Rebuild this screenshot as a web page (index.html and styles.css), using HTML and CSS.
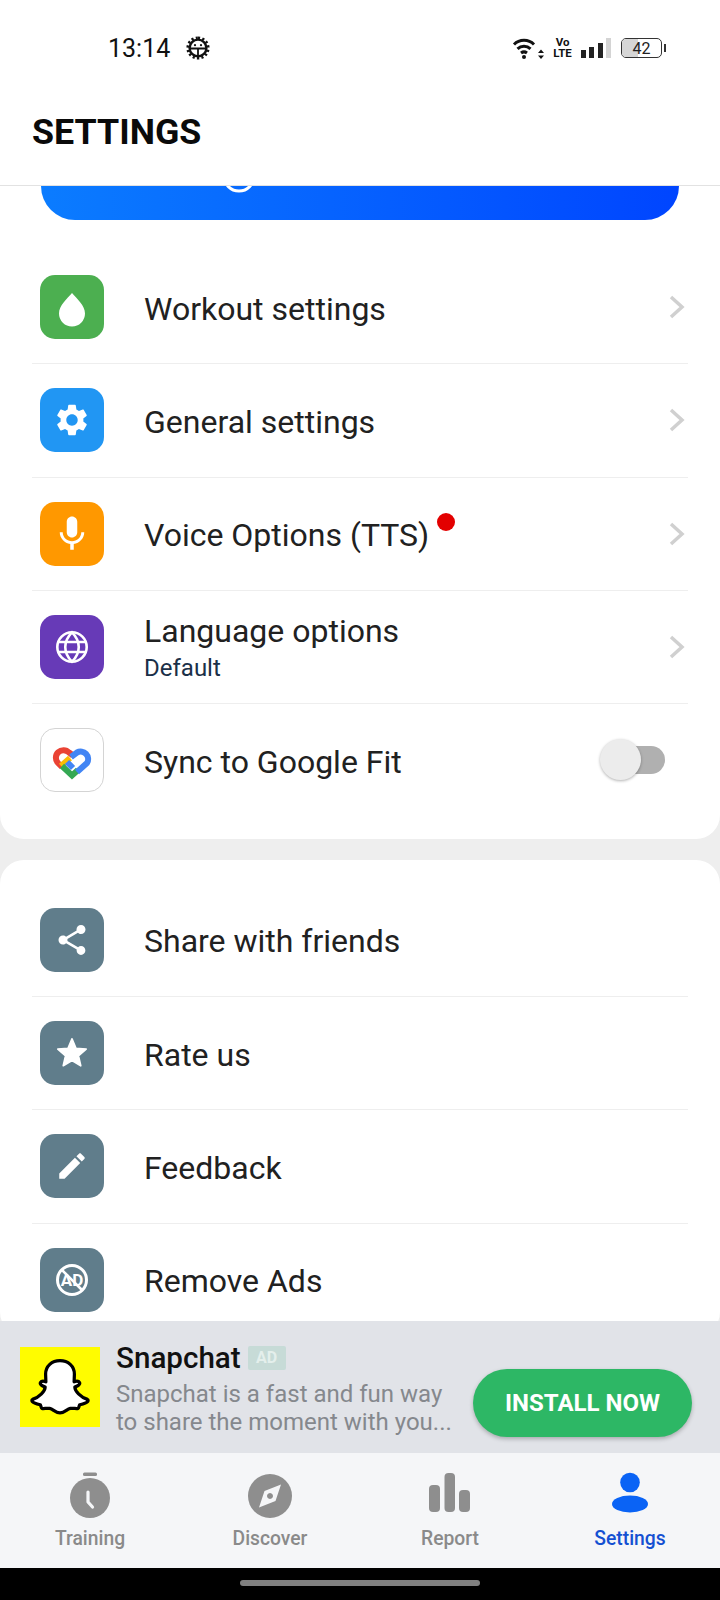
FILE: index.html
```html
<!DOCTYPE html>
<html lang="en">
<head>
<meta charset="utf-8">
<title>Settings</title>
<link rel="stylesheet" href="styles.css">
</head>
<body>
<div class="phone">
  <header class="appbar">
    <div class="status">
      <div class="status-left">
        <span class="time">13:14</span>
        <svg class="bug" viewBox="0 0 24 24" width="24" height="24">
          <g fill="none" stroke="#111" stroke-width="2.4">
            <circle cx="12" cy="12" r="8.400"/>
            <path stroke-dasharray="2.2 2.2" stroke-width="2.6" d="M12 1.700a10.300 10.300 0 1 1-.01 0"/>
            <path stroke-width="1.800" d="M3.500 12.500h17M12 12.500v8"/>
          </g>
          <circle cx="9" cy="9.200" r="1.100" fill="#111"/><circle cx="15" cy="9.200" r="1.100" fill="#111"/>
        </svg>
      </div>
      <div class="status-right">
        <svg class="wifi" viewBox="0 0 33 22" width="33" height="22">
          <g fill="none" stroke="#111" stroke-width="3">
            <path d="M2 7.500a14 14 0 0 1 20 0"/>
            <path d="M5.500 11.800a9.500 9.500 0 0 1 13 0"/>
            <path d="M9 16a5 5 0 0 1 6 0"/>
          </g>
          <circle cx="12" cy="20" r="2" fill="#111"/>
          <path fill="#111" d="M29 12.500l3 3.500h-6zM29 22l-3-3.500h6z"/>
        </svg>
        <span class="volte"><span>Vo</span><span>LTE</span></span>
        <div class="signal">
          <i class="bar b1"></i><i class="bar b2"></i><i class="bar b3"></i><i class="bar b4"></i>
        </div>
        <div class="battery"><i class="battery-fill"></i><span class="battery-num">42</span></div>
        <i class="battery-nub"></i>
      </div>
    </div>
    <h1 class="title">SETTINGS</h1>
  </header>

  <main class="scroll">
    <section class="card card-first">
      <div class="promo">
        <svg class="promo-ring" viewBox="0 0 36 36" width="36" height="36"><circle cx="18" cy="18" r="15" fill="none" stroke="#fff" stroke-width="3"/></svg>
      </div>
      <ul class="rows">
        <li class="row">
          <span class="icon green"><svg viewBox="0 0 64 64" width="64" height="64"><path fill="#fff" d="M32 18c5 6 13 12.500 13 20.500a13 13 0 0 1-26 0c0-8 8-14.500 13-20.500z"/></svg></span>
          <span class="label">Workout settings</span>
          <svg class="chev" viewBox="0 0 16 24" width="16" height="24"><path d="M2 2l11 10L2 22"/></svg>
        </li>
        <li class="row">
          <span class="icon blue"><svg viewBox="0 0 24 24" width="38" height="38"><path fill="#fff" d="M19.140 12.940c.04-.3.06-.61.06-.94 0-.32-.02-.64-.07-.94l2.030-1.580c.18-.14.23-.41.12-.61l-1.920-3.320c-.12-.22-.37-.29-.59-.22l-2.390.96c-.5-.38-1.030-.7-1.620-.94l-.36-2.540c-.04-.24-.24-.41-.48-.41h-3.840c-.24 0-.43.17-.47.41l-.36 2.540c-.59.24-1.130.57-1.620.94l-2.390-.96c-.22-.08-.47 0-.59.22L2.740 8.870c-.12.21-.08.47.12.61l2.030 1.580c-.05.3-.09.63-.09.94s.02.64.07.94l-2.030 1.580c-.18.14-.23.41-.12.61l1.920 3.320c.12.22.37.29.59.22l2.390-.96c.5.38 1.030.7 1.620.94l.36 2.540c.05.24.24.41.48.41h3.840c.24 0 .44-.17.47-.41l.36-2.540c.59-.24 1.130-.56 1.620-.94l2.390.96c.22.08.47 0 .59-.22l1.920-3.320c.12-.22.07-.47-.12-.61l-2.010-1.580zM12 15.600c-1.980 0-3.600-1.620-3.600-3.600s1.620-3.600 3.600-3.600 3.600 1.620 3.600 3.600-1.620 3.600-3.600 3.600z"/></svg></span>
          <span class="label">General settings</span>
          <svg class="chev" viewBox="0 0 16 24" width="16" height="24"><path d="M2 2l11 10L2 22"/></svg>
        </li>
        <li class="row">
          <span class="icon orange"><svg viewBox="0 0 24 24" width="42" height="42"><path fill="#fff" d="M12 14c1.660 0 3-1.340 3-3V5c0-1.660-1.340-3-3-3S9 3.340 9 5v6c0 1.660 1.340 3 3 3zm5.300-3c0 3-2.540 5.100-5.300 5.100S6.700 14 6.700 11H5c0 3.410 2.720 6.230 6 6.720V21h2v-3.280c3.280-.48 6-3.300 6-6.720h-1.700z"/></svg></span>
          <span class="label">Voice Options (TTS)</span>
          <i class="dot"></i>
          <svg class="chev" viewBox="0 0 16 24" width="16" height="24"><path d="M2 2l11 10L2 22"/></svg>
        </li>
        <li class="row">
          <span class="icon purple"><svg viewBox="0 0 36 36" width="36" height="36"><g fill="none" stroke="#fff" stroke-width="2.600"><circle cx="18" cy="18" r="14.700"/><path d="M18 3.300c-9 9-9 20.400 0 29.400c9-9 9-20.400 0-29.400z"/><path d="M4.500 13h27M4.500 23h27"/></g></svg></span>
          <span class="label-stack"><span class="label">Language options</span><span class="sub">Default</span></span>
          <svg class="chev" viewBox="0 0 16 24" width="16" height="24"><path d="M2 2l11 10L2 22"/></svg>
        </li>
        <li class="row">
          <span class="icon fit"><svg viewBox="1 1 62 62" width="62" height="62"><g fill="none" stroke-width="6"><path stroke="#ea4335" d="M33 27.500L29 24.500A7.500 7.500 0 0 0 18 35L22 39"/><path stroke="#fbbc04" d="M21 38L30 30"/><path stroke="#34a853" d="M22 38L32 47.500L38 42"/><path stroke="#4285f4" d="M31 29L37 24.500A7.500 7.500 0 0 1 47 35L37 44M33 40L27 34"/></g></svg></span>
          <span class="label">Sync to Google Fit</span>
          <span class="toggle"><i class="knob"></i></span>
        </li>
      </ul>
    </section>
    <section class="card">
      <ul class="rows">
        <li class="row">
          <span class="icon slate"><svg viewBox="0 0 24 24" width="36" height="36"><path fill="#fff" d="M18 16.080c-.76 0-1.440.3-1.960.77L8.910 12.700c.05-.23.09-.46.09-.7s-.04-.47-.09-.7l7.050-4.110c.54.5 1.250.81 2.040.81 1.660 0 3-1.340 3-3s-1.340-3-3-3-3 1.340-3 3c0 .24.04.47.09.7L8.040 9.810C7.500 9.310 6.790 9 6 9c-1.660 0-3 1.340-3 3s1.340 3 3 3c.79 0 1.500-.31 2.040-.81l7.120 4.160c-.05.21-.08.43-.08.65 0 1.610 1.310 2.920 2.920 2.920 1.610 0 2.920-1.310 2.920-2.920s-1.310-2.920-2.920-2.920z"/></svg></span>
          <span class="label">Share with friends</span>
        </li>
        <li class="row">
          <span class="icon slate"><svg viewBox="0 0 24 24" width="34" height="34"><path fill="#fff" stroke="#fff" stroke-width="1.200" stroke-linejoin="round" d="M12 17.270L18.180 21l-1.640-7.030L22 9.240l-7.190-.61L12 2 9.190 8.630 2 9.240l5.460 4.730L5.820 21z"/></svg></span>
          <span class="label">Rate us</span>
        </li>
        <li class="row">
          <span class="icon slate"><svg viewBox="0 0 24 24" width="34" height="34"><path fill="#fff" d="M3 17.250V21h3.750L17.810 9.940l-3.750-3.750L3 17.250zM20.710 7.040c.39-.39.39-1.020 0-1.410l-2.340-2.340c-.39-.39-1.020-.39-1.410 0l-1.830 1.830 3.750 3.750 1.830-1.830z"/></svg></span>
          <span class="label">Feedback</span>
        </li>
        <li class="row">
          <span class="icon slate"><svg viewBox="0 0 36 36" width="36" height="36"><circle cx="18" cy="18" r="14.500" fill="none" stroke="#fff" stroke-width="3"/><text x="18" y="24" class="ad-glyph" text-anchor="middle">AD</text><path d="M8 8l20 20" stroke="#fff" stroke-width="2.500"/></svg></span>
          <span class="label">Remove Ads</span>
        </li>
      </ul>
    </section>
  </main>

  <aside class="ad">
    <div class="ad-logo">
      <svg viewBox="0 0 80 80" width="80" height="80"><path transform="translate(4 2) scale(.9)" fill="#fff" stroke="#000" stroke-width="3.600" stroke-linejoin="round" d="M40 13c9 0 16 6 16 15l-.3 8.500c2-.8 5-1 6 .8 1 2-1.500 3.500-5.200 5 .2 4.500 6 11 14 13.700.8.300 1 1.300.3 2.300-1.500 2-6 3-9 3.700-.8 1.300-.5 3.500-1.800 4-2 .7-5-.6-8.500 0-4 .7-6 5-11.500 5s-7.500-4.300-11.500-5c-3.500-.6-6.500.7-8.500 0-1.300-.5-1-2.700-1.800-4-3-.7-7.500-1.700-9-3.700-.7-1-.5-2 .3-2.300 8-2.700 13.800-9.200 14-13.700-3.700-1.500-6.200-3-5.200-5 1-1.800 4-1.600 6-.8L24 28c0-9 7-15 16-15z"/></svg>
    </div>
    <div class="ad-body">
      <div class="ad-head"><span class="ad-title">Snapchat</span><span class="ad-badge">AD</span></div>
      <p class="ad-desc">Snapchat is a fast and fun way<br>to share the moment with you...</p>
    </div>
    <button class="install">INSTALL NOW</button>
  </aside>

  <nav class="tabs">
    <div class="tab">
      <svg viewBox="0 0 50 50" width="50" height="50"><rect x="18" y="1.500" width="14" height="3.500" rx="1.500" fill="#8e8e8e"/><circle cx="25" cy="27" r="20" fill="#8e8e8e"/><path d="M23 21v10l4.500 5" fill="none" stroke="#f5f6f8" stroke-width="3.200" stroke-linecap="round" stroke-linejoin="round"/></svg>
      <span>Training</span>
    </div>
    <div class="tab">
      <svg viewBox="0 0 50 50" width="50" height="50"><circle cx="25" cy="25" r="22" fill="#8e8e8e"/><path fill="#f5f6f8" fill-rule="evenodd" d="M36 13.500L30.500 30 14 36.500 19.500 20zM25 22a3 3 0 1 0 .01 0z"/></svg>
      <span>Discover</span>
    </div>
    <div class="tab">
      <svg viewBox="0 0 50 50" width="50" height="50" fill="#8e8e8e"><rect x="4" y="14" width="11" height="27" rx="4"/><rect x="19.500" y="2" width="10.500" height="39" rx="4"/><rect x="34" y="19" width="11" height="22" rx="4"/></svg>
      <span>Report</span>
    </div>
    <div class="tab tab-active">
      <svg viewBox="0 0 50 50" width="50" height="50" fill="#0a63f5"><circle cx="25" cy="11.500" r="9.800"/><ellipse cx="25" cy="33" rx="18" ry="8.500"/></svg>
      <span>Settings</span>
    </div>
  </nav>
  <div class="gesture"><i class="gesture-pill"></i></div>
</div>
</body>
</html>
```

FILE: styles.css
```css
* { box-sizing: border-box; }
html, body { margin: 0; padding: 0; }
body { font-family: Roboto, "Noto Sans", sans-serif; background: #eee; color: #212121; }
ul { list-style: none; margin: 0; padding: 0; }
.phone { width: 720px; height: 1600px; display: flex; flex-direction: column; overflow: hidden; }

.appbar { height: 186px; flex: none; background: #fff; border-bottom: 1px solid #e2e2e2; position: relative; z-index: 2; }
.status { height: 96px; display: flex; justify-content: space-between; align-items: center; padding: 0 54px 0 108px; }
.status-left { display: flex; align-items: center; gap: 16px; }
.time { font-size: 25px; color: #111; }
.bug { display: block; }
.status-right { display: flex; align-items: center; }
.wifi { display: block; margin-right: 10px; }
.volte { display: flex; flex-direction: column; align-items: center; font-size: 11.500px; line-height: 11.500px; font-weight: 700; color: #111; width: 16px; margin-right: 10px; font-family: "Liberation Sans Narrow", Roboto, sans-serif; }
.signal { display: flex; align-items: flex-end; gap: 3.500px; height: 20px; margin-right: 10px; }
.bar { display: block; width: 5px; background: #222; }
.b1 { height: 8px; } .b2 { height: 11px; } .b3 { height: 15px; } .b4 { height: 20px; background: #d4d4d4; }
.battery { width: 41px; height: 20px; border: 1.500px solid #333; border-radius: 5px; position: relative; display: flex; align-items: center; justify-content: center; overflow: hidden; }
.battery-fill { position: absolute; left: 0; top: 0; bottom: 0; width: 42%; background: #d6d6d6; }
.battery-num { position: relative; font-size: 16px; color: #222; }
.battery-nub { display: block; width: 2px; height: 8px; background: #333; margin-left: 2px; }
.title { margin: 0; padding-left: 32px; font-size: 35.800px; line-height: 72px; font-weight: 700; color: #0a0a0a; }

.scroll { flex: 1; min-height: 0; overflow: hidden; display: flex; flex-direction: column; gap: 21px; }
.card { background: #fff; border-radius: 24px; padding: 24px 32px 0; flex: none; }
.card-first { border-radius: 0 0 24px 24px; padding: 0 32px 22px; }

.promo { height: 34px; margin: 0 9px 31px; border-radius: 0 0 36px 36px; background: linear-gradient(90deg, #0b7cff, #0045ff); position: relative; overflow: hidden; }
.promo-ring { position: absolute; left: 180px; top: -28px; }

.row { display: flex; align-items: center; height: 113.330px; padding: 24px 0; border-bottom: 1px solid #eee; position: relative; }
.row:last-child { border-bottom: 0; height: 112.330px; }
.icon { flex: none; width: 64px; height: 64px; margin: 0 40px 0 8px; border-radius: 15px; display: flex; align-items: center; justify-content: center; }
.icon svg { display: block; }
.green { background: #4caf50; }
.blue { background: #2196f3; }
.orange { background: #ff9800; }
.purple { background: #673ab7; }
.slate { background: #607d8b; }
.fit { background: #fff; border: 1px solid #d4d4d4; }
.label { font-size: 32px; line-height: 36px; color: #212121; padding-top: 3px; }
.label-stack { display: flex; flex-direction: column; margin-top: 3px; }
.sub { font-size: 24px; line-height: 39px; color: #1b3048; }
.chev { position: absolute; right: 3px; top: 44px; fill: none; stroke: #d0d0d0; stroke-width: 3.500px; }
.dot { position: absolute; left: 405px; top: 35px; width: 18px; height: 18px; border-radius: 50%; background: #e30000; }
.toggle { position: absolute; right: 23px; top: 42px; width: 50px; height: 28px; border-radius: 14px; background: #b0b0b0; }
.knob { position: absolute; left: -15px; top: -7px; width: 41px; height: 41px; border-radius: 50%; background: #ececec; box-shadow: 0 1px 3px rgba(0,0,0,.3); }
.ad-glyph { font-size: 17px; font-weight: 700; fill: #fff; font-family: Roboto, sans-serif; }

.ad { height: 132px; flex: none; background: #e1e3e8; display: flex; align-items: center; padding: 0 28px 0 20px; position: relative; z-index: 2; }
.ad-logo { width: 80px; height: 80px; flex: none; background: #fffc00; margin-right: 16px; }
.ad-logo svg { display: block; }
.ad-body { flex: 1; min-width: 0; padding-top: 4px; }
.ad-head { display: flex; align-items: center; gap: 7px; margin-bottom: 6px; }
.ad-title { font-size: 29.600px; line-height: 32px; font-weight: 500; color: #111; }
.ad-badge { font-size: 16px; line-height: 24px; width: 38px; text-align: center; font-weight: 700; color: #e4efec; background: #c7dbd7; border-radius: 2px; }
.ad-desc { margin: 0; font-size: 24px; line-height: 28px; color: #85888d; white-space: nowrap; }
.install { flex: none; width: 219px; height: 68px; margin-top: 32px; border: 0; border-radius: 34px; background: #2db765; color: #fff; font-family: Roboto, sans-serif; font-size: 24px; font-weight: 700; box-shadow: 0 2px 4px rgba(0,0,0,.25); padding: 0; }

.tabs { height: 115px; flex: none; background: #f5f6f8; display: grid; grid-template-columns: repeat(4, 1fr); position: relative; z-index: 2; }
.tab { display: flex; flex-direction: column; align-items: center; padding-top: 18px; color: #8a8a8a; font-size: 19.300px; font-weight: 500; line-height: 24px; gap: 6px; }
.tab svg { display: block; }
.tab-active { color: #1450d2; }
.gesture { height: 32px; flex: none; background: #000; display: flex; justify-content: center; padding-top: 12px; position: relative; z-index: 2; }
.gesture-pill { display: block; width: 240px; height: 6px; border-radius: 3px; background: #808080; }
```
